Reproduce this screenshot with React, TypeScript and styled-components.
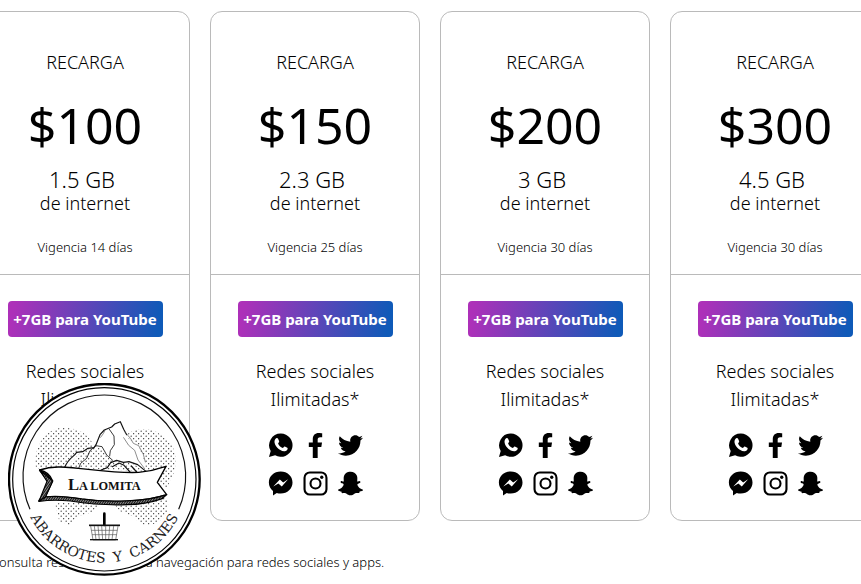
import React from "react";
import styled, { createGlobalStyle } from "styled-components";
import { FaFacebookF, FaTwitter, FaSnapchatGhost } from "react-icons/fa";

const GlobalStyle = createGlobalStyle`
  *, *::before, *::after { box-sizing: border-box; }
  body {
    margin: 0;
    background: #fff;
    color: #000;
    font-family: "Noto Sans", "Open Sans", sans-serif;
    font-weight: 300;
    overflow-x: hidden;
  }
  p, h2, ul { margin: 0; padding: 0; }
`;

const Page = styled.main`
  position: relative;
  overflow: hidden;
  min-height: 100vh;
  padding-top: 11px;
`;

const Plans = styled.section`
  display: grid;
  grid-template-columns: repeat(4, 1fr);
  gap: 20px;
  margin: 0 -19px 0 -20px;
`;

const Card = styled.article`
  border: 1px solid #bababa;
  border-radius: 12px;
  text-align: center;
`;

const Offer = styled.header`
  padding: 38px 0 17px;
  border-bottom: 1px solid #bababa;
`;

const Label = styled.h2`
  font-size: 18px;
  font-weight: 300;
  line-height: 24px;
`;

const Price = styled.p`
  margin-top: 15px;
  font-size: 50px;
  font-weight: 400;
  line-height: 72px;
`;

const Data = styled.p`
  margin-top: 6px;
  padding-right: 6px;
  font-size: 22px;
  line-height: 24px;
`;

const DataUnit = styled.p`
  font-size: 18px;
  line-height: 24px;
`;

const Validity = styled.p`
  margin-top: 22px;
  font-size: 13px;
  line-height: 20px;
`;

const Benefits = styled.div`
  display: flex;
  flex-direction: column;
  align-items: center;
  padding: 26px 0 24px;
`;

const Bonus = styled.strong`
  width: 155px;
  border-radius: 4px;
  background: linear-gradient(100deg, #ad30b9 4%, #0f5ab8 96%);
  color: #fff;
  font-size: 15px;
  font-weight: 700;
  line-height: 36px;
  white-space: nowrap;
`;

const Social = styled.p`
  margin: 20px 0 19px;
  font-size: 18px;
  line-height: 28px;
`;

const Networks = styled.ul`
  display: grid;
  grid-template-columns: repeat(3, 26px);
  gap: 12px 9px;
  list-style: none;
`;

const Network = styled.li`
  display: flex;
  align-items: center;
  justify-content: center;
  height: 26px;

  svg { width: 25px; height: 25px; }
`;

const Note = styled.p`
  margin: 29px 0 0 -9px;
  font-size: 13px;
  line-height: 24px;
  white-space: nowrap;
`;

const Seal = styled.div`
  position: absolute;
  left: 8px;
  top: 383px;
  width: 193px;
  height: 193px;

  svg { display: block; width: 100%; height: 100%; }
`;

const WhatsApp = () => (
  <svg viewBox="0 0 26 26" role="img" aria-label="WhatsApp">
    <path d="M13.3.6A12.1 12.1 0 1 1 7.4 23.2L1 25l1.8-6.2A12.1 12.1 0 0 1 13.3.6Z" />
    <path
      fill="#fff"
      d="M7.5 6.5c1-1.5 2.5-1.6 3-.4l1.1 2.5c.3.9-.9 1.6-1.1 2.2.8 2.2 2.5 3.9 4.8 4.7.8-.2 1.4-1.9 2.2-1.5l2.6 1.3c1.1.7-.2 2.9-1.8 3.4-3.1.9-6.7-1.3-8.6-3.4-2.2-2.3-4-6.1-2.2-8.8Z"
    />
  </svg>
);

const Messenger = () => (
  <svg viewBox="0 0 26 26" role="img" aria-label="Messenger">
    <path d="M13.2.6c7 0 12.3 4.9 12.3 11.3s-5.3 11.5-12.3 11.5c-1.5 0-2.8-.2-4.1-.6L5.2 25.4v-4.6C2.5 18.7.9 15.6.9 11.9.9 5.5 6.2.6 13.2.6Z" />
    <path fill="#fff" d="m5.5 16 6.8-7.1 3.5 3.1 5.1-3.3-6.6 7.3-3.5-3Z" />
  </svg>
);

const Instagram = () => (
  <svg viewBox="0 0 26 26" role="img" aria-label="Instagram">
    <g fill="none" stroke="#000" strokeWidth="2.2">
      <rect x="1.6" y="1.6" width="22.8" height="22.8" rx="5.5" />
      <circle cx="13" cy="13" r="5.2" />
    </g>
    <circle cx="19.5" cy="6.5" r="1.7" />
  </svg>
);

const LomitaSeal = () => (
  <svg viewBox="24 9 579 579" role="img" aria-label="La Lomita, abarrotes y carnes">
    <defs>
      <pattern id="dots" width="15" height="15" patternUnits="userSpaceOnUse">
        <circle cx="3.5" cy="3.5" r="1.8" fill="#222" />
        <circle cx="11" cy="11" r="1.8" fill="#222" />
      </pattern>
      <pattern id="hatch" width="6" height="6" patternUnits="userSpaceOnUse" patternTransform="rotate(35)">
        <rect width="6" height="6" fill="#aaa" />
        <rect width="3.5" height="6" fill="#111" />
      </pattern>
      <path id="motto" d="M82 392 A249 249 0 0 0 544 392" />
    </defs>

    <circle cx="313" cy="298" r="286" fill="#fff" stroke="#000" strokeWidth="7" />
    <circle cx="313" cy="298" r="275" fill="none" stroke="#000" strokeWidth="3.5" />
    <path d="M90 388A244 244 0 1 1 536 388" fill="none" stroke="#111" strokeWidth="3.5" />

    <g fill="url(#dots)">
      <path d="M108 265C98 205 132 145 190 143C238 143 274 168 282 202L240 265Z" />
      <path d="M365 178C390 145 445 136 482 164C522 184 539 236 519 284L500 325L430 285Z" />
      <path d="M165 370L308 365L275 397L230 410L209 436L178 424Z" />
      <path d="M342 372L498 350C518 392 491 433 441 435Q419 436 402 410L360 394Z" />
    </g>

    <path
      d="M194 262C210 230 226 222 242 216C260 214 264 205 283 197L302 155L332 137L362 125L376 152L388 180L410 190L430 232L440 275L194 265Z"
      fill="#fff"
    />
    <path
      d="M200 262L240 218L285 198L312 210L342 244L400 250L435 275L210 262Z"
      fill="url(#dots)"
    />
    <g fill="none" stroke="#111" strokeLinecap="round" strokeLinejoin="round">
      <path strokeWidth="3.5" d="M194 262C207 231 224 230 230 217L248 215L264 205L282 203L288 194L300 164L313 150L335 141L344 132L361 125L371 148L380 164" />
      <path strokeWidth="2.5" d="M233 272L242 250L260 235L270 212L288 197L306 200L320 225L338 241M328 148L342 168L343 194L331 212L329 228" />
      <path strokeWidth="2" stroke="#555" d="M371 173L386 196L404 211L414 240L434 266M373 154L392 176L400 190L416 197L430 223L436 246M302 172Q312 160 315 151" />
      <path strokeWidth="3.5" d="M303 270L322 263L332 248L350 241L370 247L387 245L413 254L438 274M337 260L357 249L372 256L390 276M394 258L410 276" />
    </g>

    <path d="M118 270L143 285L158 305L116 363L130 348L145 305Z" fill="url(#hatch)" stroke="#000" strokeWidth="4" />
    <path
      d="M119 270Q148 260 180 261C255 264 340 281 416 277Q458 273 498 259L472 307L500 344C437 365 330 369 245 357Q180 346 136 351L158 303Q148 276 119 270Z"
      fill="#fff"
      stroke="#000"
      strokeWidth="4"
      strokeLinejoin="round"
    />
    <path d="M119 270L158 303L136 351L117 364L141 304Z" fill="url(#hatch)" stroke="#000" strokeWidth="3.5" strokeLinejoin="round" />
    <path
      d="M117 364L136 351Q180 346 245 357C330 369 437 365 500 344L487 356Q436 374 380 374Q300 377 211 363Q160 358 117 364Z"
      fill="url(#hatch)"
      stroke="#000"
      strokeWidth="3.5"
      strokeLinejoin="round"
    />
    <text x="313" y="331" textAnchor="middle" fontFamily="Liberation Serif, serif" fontWeight="700" fontSize="37" fill="#111">
      <tspan fontSize="50">L</tspan>A LOMITA
    </text>

    <path d="M313 401V435" stroke="#000" strokeWidth="8" strokeLinecap="round" />
    <path d="M267 436H360" stroke="#111" strokeWidth="5" />
    <path
      d="M272 438L279 480H347L354 438M283 438L288 479M294 438L298 479M305 438L308 479M317 438V479M329 438L326 479M341 438L336 479M274 451H352M276 464H350"
      fill="none"
      stroke="#555"
      strokeWidth="2"
    />
    <path d="M270 479H354" stroke="#111" strokeWidth="4" />

    <text fontFamily="DejaVu Serif, serif" fontSize="42" fill="#222" textAnchor="middle">
      <textPath href="#motto" startOffset="50%">{"ABARROTES\u00a0\u00a0Y\u00a0\u00a0CARNES"}</textPath>
    </text>
  </svg>
);

const plans = [
  { price: "$100", data: "1.5 GB", days: 14 },
  { price: "$150", data: "2.3 GB", days: 25 },
  { price: "$200", data: "3 GB", days: 30 },
  { price: "$300", data: "4.5 GB", days: 30 },
];

export default function App() {
  return (
    <>
      <GlobalStyle />
      <Page>
        <Plans>
          {plans.map((plan) => (
            <Card key={plan.price}>
              <Offer>
                <Label>RECARGA</Label>
                <Price>{plan.price}</Price>
                <Data>{plan.data}</Data>
                <DataUnit>de internet</DataUnit>
                <Validity>Vigencia {plan.days} días</Validity>
              </Offer>
              <Benefits>
                <Bonus>+7GB para YouTube</Bonus>
                <Social>
                  Redes sociales
                  <br />
                  Ilimitadas*
                </Social>
                <Networks>
                  <Network><WhatsApp /></Network>
                  <Network><FaFacebookF aria-label="Facebook" /></Network>
                  <Network><FaTwitter aria-label="Twitter" /></Network>
                  <Network><Messenger /></Network>
                  <Network><Instagram /></Network>
                  <Network><FaSnapchatGhost aria-label="Snapchat" /></Network>
                </Networks>
              </Benefits>
            </Card>
          ))}
        </Plans>
        <Note>Consulta restricciones de la navegación para redes sociales y apps.</Note>
        <Seal><LomitaSeal /></Seal>
      </Page>
    </>
  );
}
